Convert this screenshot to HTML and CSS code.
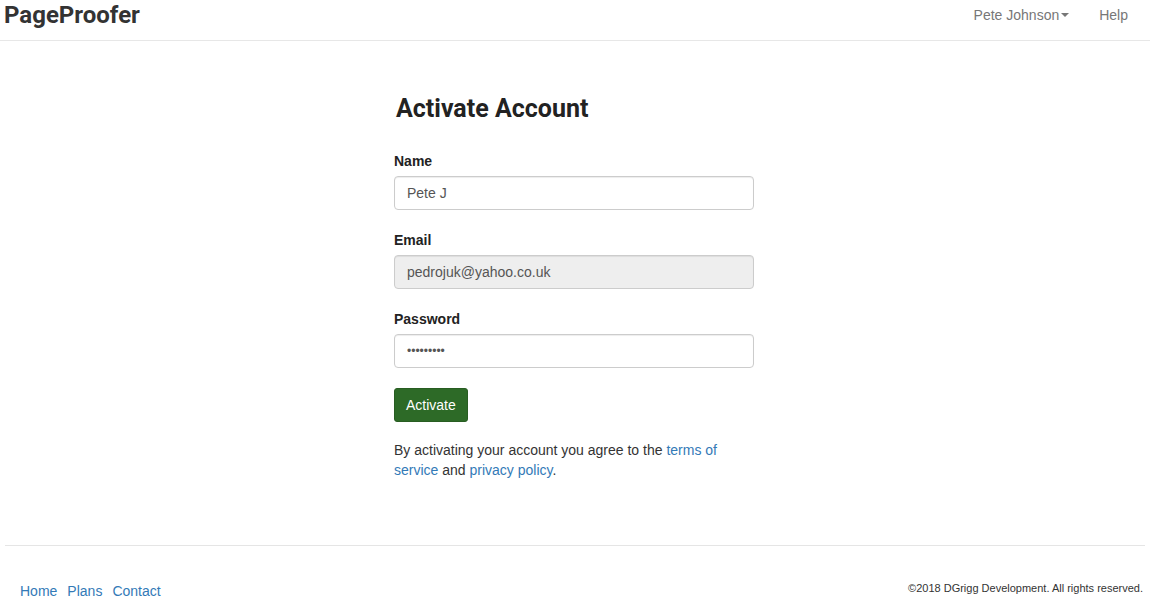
FILE: index.html
```html
<!DOCTYPE html>
<html lang="en">
<head>
<meta charset="utf-8">
<title>Activate Account - PageProofer</title>
<link rel="stylesheet" href="styles.css">
</head>
<body>
<header class="navbar">
  <a class="brand" href="#">PageProofer</a>
  <nav class="nav-right">
    <a class="nav-link" href="#">Pete Johnson<span class="caret"></span></a>
    <a class="nav-link" href="#">Help</a>
  </nav>
</header>
<main class="main">
  <form class="form">
    <h2 class="title">Activate Account</h2>
    <div class="group">
      <label class="label" for="name">Name</label>
      <input class="input" id="name" type="text" value="Pete J">
    </div>
    <div class="group">
      <label class="label" for="email">Email</label>
      <input class="input" id="email" type="email" value="pedrojuk@yahoo.co.uk" disabled>
    </div>
    <div class="group">
      <label class="label" for="password">Password</label>
      <input class="input input-pw" id="password" type="password" value="password1">
    </div>
    <button class="btn" type="button">Activate</button>
    <p class="terms">By activating your account you agree to the <a href="#">terms of service</a> and <a href="#">privacy policy</a>.</p>
  </form>
</main>
<footer class="footer">
  <hr class="rule">
  <div class="footer-row">
    <nav class="footer-links">
      <a href="#">Home</a>
      <a href="#">Plans</a>
      <a href="#">Contact</a>
    </nav>
    <p class="copy">&copy;2018 DGrigg Development. All rights reserved.</p>
  </div>
</footer>
</body>
</html>
```

FILE: styles.css
```css
* { box-sizing: border-box; }
html, body { margin: 0; padding: 0; }
body {
  font-family: "Liberation Sans", Arial, sans-serif;
  font-size: 14px;
  line-height: 20px;
  color: #333;
  background: #fff;
}
a { color: #337ab7; text-decoration: none; }

.navbar {
  display: flex;
  justify-content: space-between;
  align-items: center;
  height: 41px;
  border-bottom: 1px solid #e7e7e7;
}
.brand {
  font-family: Roboto, "Liberation Sans", sans-serif;
  font-weight: 700;
  font-size: 24px;
  color: #333;
  padding-left: 4px;
  margin-top: -11px;
  line-height: 30px;
}
.nav-right { display: flex; padding-right: 7px; margin-top: -10px; }
.nav-link {
  color: #777;
  padding: 0 15px;
  display: flex;
  align-items: center;
}
.caret {
  display: inline-block;
  width: 0; height: 0;
  margin-left: 2px;
  border-top: 4px solid #777;
  border-left: 4px solid transparent;
  border-right: 4px solid transparent;
}

.main {
  padding: 55px 2px 0 0;
  display: flex;
  justify-content: center;
}
.form { width: 360px; }
.title {
  font-family: Roboto, "Liberation Sans", sans-serif;
  font-weight: 700;
  font-size: 25px;
  line-height: 26.4px;
  margin: 0 0 29px 2px;
  color: #222;
}
.group { margin-bottom: 20px; }
.label {
  display: block;
  font-weight: 700;
  margin-bottom: 5px;
  color: #222;
}
.input {
  display: block;
  width: 100%;
  height: 34px;
  padding: 6px 12px;
  font-family: "Liberation Sans", Arial, sans-serif;
  font-size: 14px;
  color: #555;
  background: #fff;
  border: 1px solid #ccc;
  border-radius: 4px;
  box-shadow: inset 0 1px 1px rgba(0,0,0,.075);
}
.input-pw { font-size: 12px; }
.input:disabled { background: #eee; opacity: 1; color: #555; }
.btn {
  height: 34px;
  padding: 6px 11px;
  font-family: "Liberation Sans", Arial, sans-serif;
  font-size: 14px;
  line-height: 20px;
  color: #fff;
  background: #2d6a27;
  border: 1px solid #285d22;
  border-radius: 3px;
}
.terms { margin: 18px 0 0; }

.footer { margin-top: 65px; }
.rule { margin: 0 5px; border: 0; border-top: 1px solid #e5e5e5; }
.footer-row {
  display: flex;
  justify-content: space-between;
  align-items: flex-end;
  padding: 0 7px 0 20px;
  margin-top: 35px;
}
.footer-links { display: flex; gap: 10px; }
.copy { margin: 0 0 6px; font-size: 11px; line-height: 14px; color: #333; }
```
